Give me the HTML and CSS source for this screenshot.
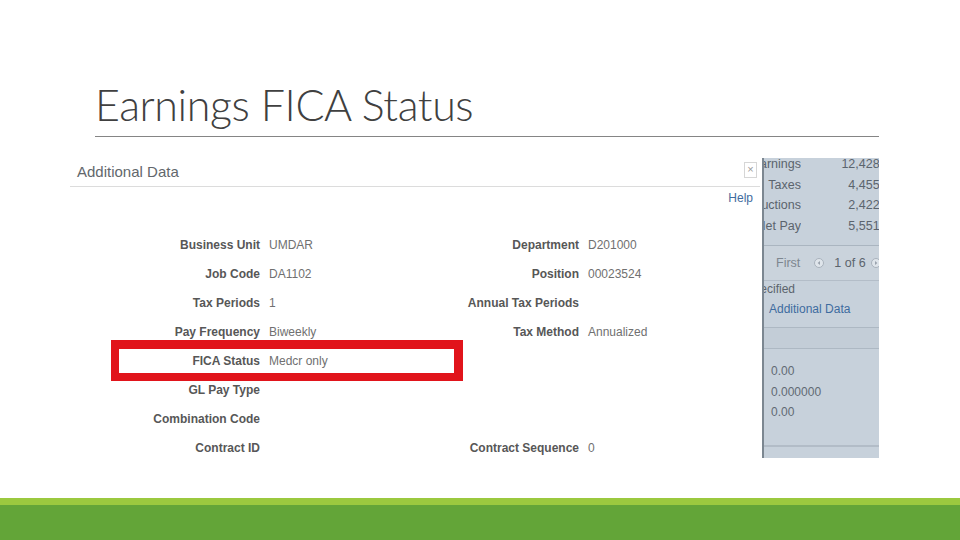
FILE: index.html
```html
<!DOCTYPE html>
<html lang="en">
<head>
<meta charset="utf-8">
<title>Earnings FICA Status</title>
<link rel="stylesheet" href="styles.css">
</head>
<body>
<div class="slide">
  <div class="title-area">
    <h1 class="title">Earnings FICA Status</h1>
  </div>

  <div class="shot">
    <div class="dialog">
      <div class="dialog-head">
        <span class="dialog-title">Additional Data</span>
        <span class="close">&times;</span>
      </div>
      <div class="help-row"><span class="help">Help</span></div>

      <div class="form">
        <div class="lbl">Business Unit</div><div class="val">UMDAR</div>
        <div class="lbl">Department</div><div class="val">D201000</div>

        <div class="lbl">Job Code</div><div class="val">DA1102</div>
        <div class="lbl">Position</div><div class="val">00023524</div>

        <div class="lbl">Tax Periods</div><div class="val">1</div>
        <div class="lbl">Annual Tax Periods</div><div class="val"></div>

        <div class="lbl">Pay Frequency</div><div class="val">Biweekly</div>
        <div class="lbl">Tax Method</div><div class="val">Annualized</div>

        <div class="lbl">FICA Status</div><div class="val">Medcr only</div>
        <div class="lbl"></div><div class="val"></div>

        <div class="lbl">GL Pay Type</div><div class="val"></div>
        <div class="lbl"></div><div class="val"></div>

        <div class="lbl">Combination Code</div><div class="val"></div>
        <div class="lbl"></div><div class="val"></div>

        <div class="lbl">Contract ID</div><div class="val"></div>
        <div class="lbl">Contract Sequence</div><div class="val">0</div>
      </div>

      <div class="highlight"></div>
    </div>

    <div class="panel">
      <div class="totals">
        <div class="t-lbl"><span>Earnings</span></div><div class="t-num">12,428.40</div>
        <div class="t-lbl"><span>Taxes</span></div><div class="t-num">4,455.96</div>
        <div class="t-lbl"><span>Deductions</span></div><div class="t-num">2,422.50</div>
        <div class="t-lbl"><span>Net Pay</span></div><div class="t-num">5,551.94</div>
      </div>
      <div class="pager">
        <span class="pg-first">First</span>
        <span class="pg-btn"><svg width="10" height="10" viewBox="0 0 10 10"><circle cx="5" cy="5" r="4.5" fill="#dfe5eb" stroke="#a9b2bc"/><path d="M6 3 L3.6 5 L6 7 Z" fill="#9aa3ad"/></svg></span>
        <span class="pg-count">1 of 6</span>
        <span class="pg-btn pg-next"><svg width="10" height="10" viewBox="0 0 10 10"><circle cx="5" cy="5" r="4.5" fill="#dfe5eb" stroke="#a9b2bc"/><path d="M4 3 L6.4 5 L4 7 Z" fill="#9aa3ad"/></svg></span>
      </div>
      <div class="spec"><span>Not Specified</span></div>
      <div class="p-link">Additional Data</div>
      <div class="band"></div>
      <div class="p-vals">
        <div>0.00</div>
        <div>0.000000</div>
        <div>0.00</div>
      </div>
      <div class="p-end"></div>
    </div>
  </div>

  <div class="footer">
    <div class="footer-light"></div>
    <div class="footer-dark"></div>
  </div>
</div>
</body>
</html>
```

FILE: styles.css
```css
html, body {
  margin: 0;
  padding: 0;
  background: #ffffff;
}

.slide {
  width: 960px;
  height: 540px;
  overflow: hidden;
  display: flex;
  flex-direction: column;
  font-family: "Liberation Sans", Arial, sans-serif;
  background: #ffffff;
}

.title-area {
  margin: 0 81px 0 95px;
  padding-top: 79px;
  padding-bottom: 5px;
  border-bottom: 1px solid #858585;
}

.title {
  margin: 0;
  font-family: Lato, "Open Sans", sans-serif;
  font-weight: 300;
  font-size: 43px;
  line-height: 52px;
  letter-spacing: -0.4px;
  color: #404040;
}

.shot {
  margin: 13px 0 0 70px;
  width: 809px;
  height: 308px;
  display: flex;
}

/* dialog */
.dialog {
  width: 692px;
  flex: none;
  position: relative;
  background: #ffffff;
}

.dialog-head {
  height: 30px;
  padding-top: 6px;
  margin-right: 2px;
  padding-left: 7px;
  border-bottom: 1px solid #dcdcdc;
  display: flex;
  align-items: center;
}

.dialog-title {
  font-size: 15px;
  color: #62676c;
}

.close {
  margin-left: auto;
  margin-right: 3px;
  width: 11px;
  height: 14px;
  border: 1px solid #d6d6d6;
  color: #9a9a9a;
  font-size: 11px;
  line-height: 13px;
  text-align: center;
  margin-top: -3px;
}

.help-row {
  text-align: right;
  padding-right: 9px;
  line-height: 20px;
  height: 20px;
}

.help {
  font-size: 12px;
  color: #3f6c9e;
}

.form {
  margin-top: 24px;
  margin-left: 30px;
  display: grid;
  grid-template-columns: 160px 178px 123px 1fr;
  column-gap: 9px;
  grid-auto-rows: 29px;
  font-size: 12px;
  line-height: 29px;
}

.lbl {
  text-align: right;
  font-weight: bold;
  color: #575757;
  white-space: nowrap;
}

.val {
  color: #707070;
  white-space: nowrap;
}

.highlight {
  position: absolute;
  left: 41px;
  top: 190px;
  width: 352px;
  height: 41px;
  box-sizing: border-box;
  border: 8px solid #e1141b;
  border-top-width: 9px;
  border-right-width: 9px;
}

/* right panel */
.panel {
  width: 117px;
  flex: none;
  margin-top: 8px;
  height: 300px;
  box-sizing: border-box;
  background: #c7d1db;
  border-left: 2px solid #7c8791;
  overflow: hidden;
  font-size: 12px;
  color: #5b646d;
}

.totals {
  margin-top: -4px;
  padding-bottom: 9px;
  border-bottom: 1px solid #aab5c0;
  display: grid;
  grid-template-columns: 37px 96px;
  grid-auto-rows: 20.5px;
  line-height: 20.5px;
  font-size: 12.5px;
}

.t-lbl {
  display: flex;
  justify-content: flex-end;
  overflow: hidden;
  white-space: nowrap;
}

.t-num {
  text-align: right;
  white-space: nowrap;
}

.pager {
  height: 35px;
  box-sizing: border-box;
  border-bottom: 1px solid #b3bdc8;
  background: #cad3dc;
  display: flex;
  align-items: center;
  padding-left: 12px;
  white-space: nowrap;
  font-size: 12.5px;
}

.pg-first {
  color: #7d868f;
}

.pg-btn {
  display: flex;
  margin-left: 14px;
}

.pg-count {
  margin-left: 10px;
}

.pg-next {
  margin-left: 5px;
}

.spec {
  height: 16px;
  line-height: 16px;
  width: 31px;
  display: flex;
  justify-content: flex-end;
  overflow: hidden;
  white-space: nowrap;
}

.p-link {
  margin-top: 2px;
  line-height: 20px;
  padding-left: 5px;
  color: #3e6c9f;
  white-space: nowrap;
}

.band {
  margin-top: 8px;
  height: 20px;
  background: #c3cdd7;
  border-top: 1px solid #adb8c3;
  border-bottom: 1px solid #adb8c3;
}

.p-vals {
  padding-top: 12px;
  padding-left: 7px;
  line-height: 20.5px;
  color: #616a73;
}

.p-end {
  margin-top: 22px;
  border-top: 2px solid #b2bcc7;
}

/* footer */
.footer {
  margin-top: auto;
}

.footer-light {
  height: 7px;
  background: #9bc93f;
}

.footer-dark {
  height: 35px;
  background: #63a538;
}
```
